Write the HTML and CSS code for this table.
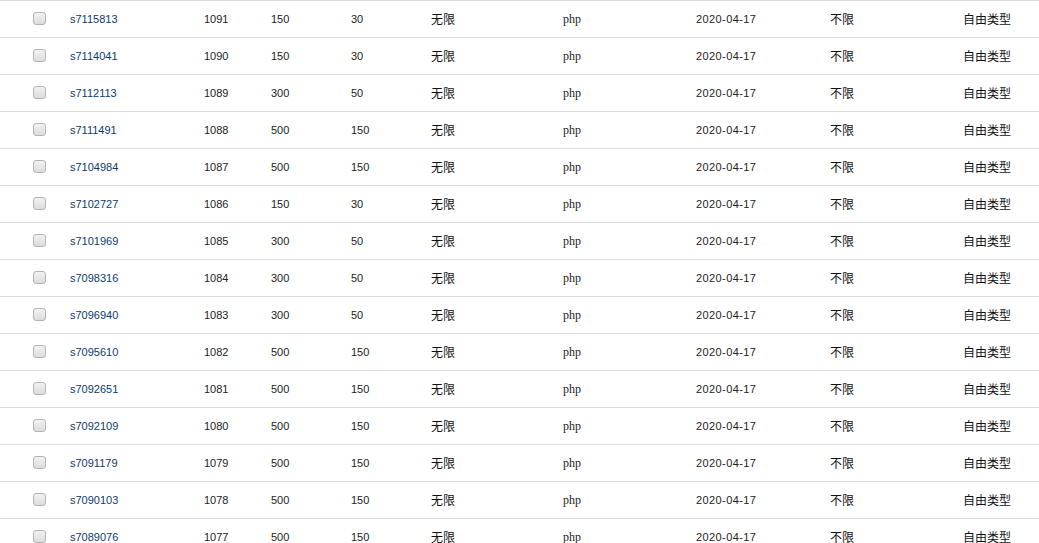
FILE: index.html
```html
<!DOCTYPE html>
<html lang="zh">
<head>
<meta charset="utf-8">
<link rel="stylesheet" href="styles.css">
</head>
<body>
<div class="list">
  <div class="row"><span class="cb"></span><a class="sid">s7115813</a><span class="num">1091</span><span class="num">150</span><span class="num">30</span><span class="cn">无限</span><span class="lang">php</span><span class="date">2020-04-17</span><span class="cn">不限</span><span class="cn">自由类型</span></div>
  <div class="row"><span class="cb"></span><a class="sid">s7114041</a><span class="num">1090</span><span class="num">150</span><span class="num">30</span><span class="cn">无限</span><span class="lang">php</span><span class="date">2020-04-17</span><span class="cn">不限</span><span class="cn">自由类型</span></div>
  <div class="row"><span class="cb"></span><a class="sid">s7112113</a><span class="num">1089</span><span class="num">300</span><span class="num">50</span><span class="cn">无限</span><span class="lang">php</span><span class="date">2020-04-17</span><span class="cn">不限</span><span class="cn">自由类型</span></div>
  <div class="row"><span class="cb"></span><a class="sid">s7111491</a><span class="num">1088</span><span class="num">500</span><span class="num">150</span><span class="cn">无限</span><span class="lang">php</span><span class="date">2020-04-17</span><span class="cn">不限</span><span class="cn">自由类型</span></div>
  <div class="row"><span class="cb"></span><a class="sid">s7104984</a><span class="num">1087</span><span class="num">500</span><span class="num">150</span><span class="cn">无限</span><span class="lang">php</span><span class="date">2020-04-17</span><span class="cn">不限</span><span class="cn">自由类型</span></div>
  <div class="row"><span class="cb"></span><a class="sid">s7102727</a><span class="num">1086</span><span class="num">150</span><span class="num">30</span><span class="cn">无限</span><span class="lang">php</span><span class="date">2020-04-17</span><span class="cn">不限</span><span class="cn">自由类型</span></div>
  <div class="row"><span class="cb"></span><a class="sid">s7101969</a><span class="num">1085</span><span class="num">300</span><span class="num">50</span><span class="cn">无限</span><span class="lang">php</span><span class="date">2020-04-17</span><span class="cn">不限</span><span class="cn">自由类型</span></div>
  <div class="row"><span class="cb"></span><a class="sid">s7098316</a><span class="num">1084</span><span class="num">300</span><span class="num">50</span><span class="cn">无限</span><span class="lang">php</span><span class="date">2020-04-17</span><span class="cn">不限</span><span class="cn">自由类型</span></div>
  <div class="row"><span class="cb"></span><a class="sid">s7096940</a><span class="num">1083</span><span class="num">300</span><span class="num">50</span><span class="cn">无限</span><span class="lang">php</span><span class="date">2020-04-17</span><span class="cn">不限</span><span class="cn">自由类型</span></div>
  <div class="row"><span class="cb"></span><a class="sid">s7095610</a><span class="num">1082</span><span class="num">500</span><span class="num">150</span><span class="cn">无限</span><span class="lang">php</span><span class="date">2020-04-17</span><span class="cn">不限</span><span class="cn">自由类型</span></div>
  <div class="row"><span class="cb"></span><a class="sid">s7092651</a><span class="num">1081</span><span class="num">500</span><span class="num">150</span><span class="cn">无限</span><span class="lang">php</span><span class="date">2020-04-17</span><span class="cn">不限</span><span class="cn">自由类型</span></div>
  <div class="row"><span class="cb"></span><a class="sid">s7092109</a><span class="num">1080</span><span class="num">500</span><span class="num">150</span><span class="cn">无限</span><span class="lang">php</span><span class="date">2020-04-17</span><span class="cn">不限</span><span class="cn">自由类型</span></div>
  <div class="row"><span class="cb"></span><a class="sid">s7091179</a><span class="num">1079</span><span class="num">500</span><span class="num">150</span><span class="cn">无限</span><span class="lang">php</span><span class="date">2020-04-17</span><span class="cn">不限</span><span class="cn">自由类型</span></div>
  <div class="row"><span class="cb"></span><a class="sid">s7090103</a><span class="num">1078</span><span class="num">500</span><span class="num">150</span><span class="cn">无限</span><span class="lang">php</span><span class="date">2020-04-17</span><span class="cn">不限</span><span class="cn">自由类型</span></div>
  <div class="row"><span class="cb"></span><a class="sid">s7089076</a><span class="num">1077</span><span class="num">500</span><span class="num">150</span><span class="cn">无限</span><span class="lang">php</span><span class="date">2020-04-17</span><span class="cn">不限</span><span class="cn">自由类型</span></div>
</div>
</body>
</html>
```
FILE: styles.css
```css
html, body {
  margin: 0;
  padding: 0;
  background: #fff;
}
body {
  font-family: "Liberation Sans", Arial, sans-serif;
  font-size: 11px;
  color: #222;
  overflow: hidden;
}
.list {
  display: flex;
  flex-direction: column;
}
.row {
  display: grid;
  grid-template-columns: 37px 134px 67px 80px 80px 132px 133px 134px 133px 1fr;
  align-items: center;
  height: 36px;
  padding-left: 33px;
  border-top: 1px solid #dddddd;
  line-height: 12px;
}
.cb {
  width: 11px;
  height: 11px;
  border: 1px solid #b4b4b4;
  border-radius: 3px;
  background: linear-gradient(#f2f2f2, #dcdcdc);
  margin-top: -1px;
}
.sid {
  color: #0d3a6e;
  text-decoration: none;
  font-size: 11px;
}
.num {
  font-size: 11px;
  color: #222;
}
.cn {
  font-family: "Noto Sans CJK SC", "Liberation Sans", sans-serif;
  font-size: 12px;
  line-height: 12px;
  color: #111;
  margin-top: -1px;
}
.lang {
  font-family: "Liberation Serif", serif;
  font-size: 12px;
  color: #222;
}
.date {
  font-size: 11px;
  letter-spacing: 0.4px;
  color: #222;
}
```
